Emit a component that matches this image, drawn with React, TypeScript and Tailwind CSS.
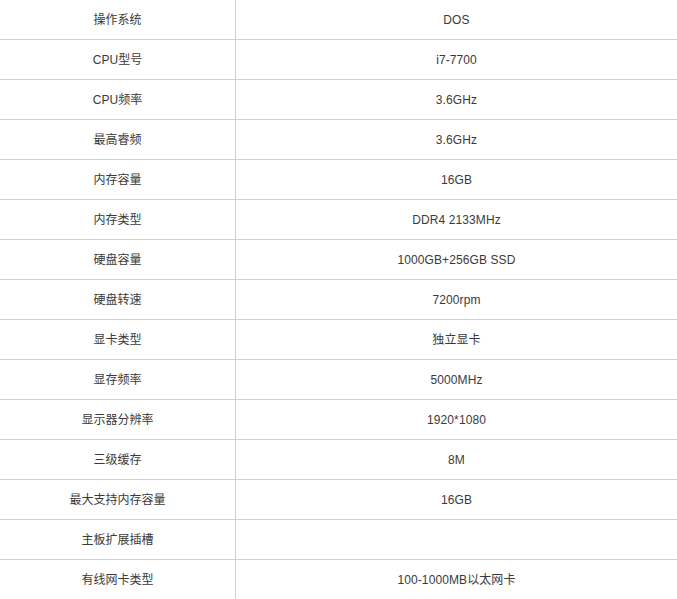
const rows: [string, string][] = [
  ['操作系统', 'DOS'],
  ['CPU型号', 'i7-7700'],
  ['CPU频率', '3.6GHz'],
  ['最高睿频', '3.6GHz'],
  ['内存容量', '16GB'],
  ['内存类型', 'DDR4 2133MHz'],
  ['硬盘容量', '1000GB+256GB SSD'],
  ['硬盘转速', '7200rpm'],
  ['显卡类型', '独立显卡'],
  ['显存频率', '5000MHz'],
  ['显示器分辨率', '1920*1080'],
  ['三级缓存', '8M'],
  ['最大支持内存容量', '16GB'],
  ['主板扩展插槽', ''],
  ['有线网卡类型', '100-1000MB以太网卡'],
]

export default function App() {
  return (
    <div
      className="w-[677px] h-[599px] overflow-hidden bg-white text-[12px] text-[#3a3a3a]"
      style={{ fontFamily: '"Liberation Sans", "Noto Sans CJK SC", sans-serif' }}
    >
      {rows.map(([label, value]) => (
        <div key={label} className="flex h-[40px] border-b border-[#d0d0d0]">
          <div className="w-[236px] shrink-0 flex items-center justify-center border-r border-[#d0d0d0]">
            {label}
          </div>
          <div className="flex-1 flex items-center justify-center tracking-[0.1px]">{value}</div>
        </div>
      ))}
    </div>
  )
}
